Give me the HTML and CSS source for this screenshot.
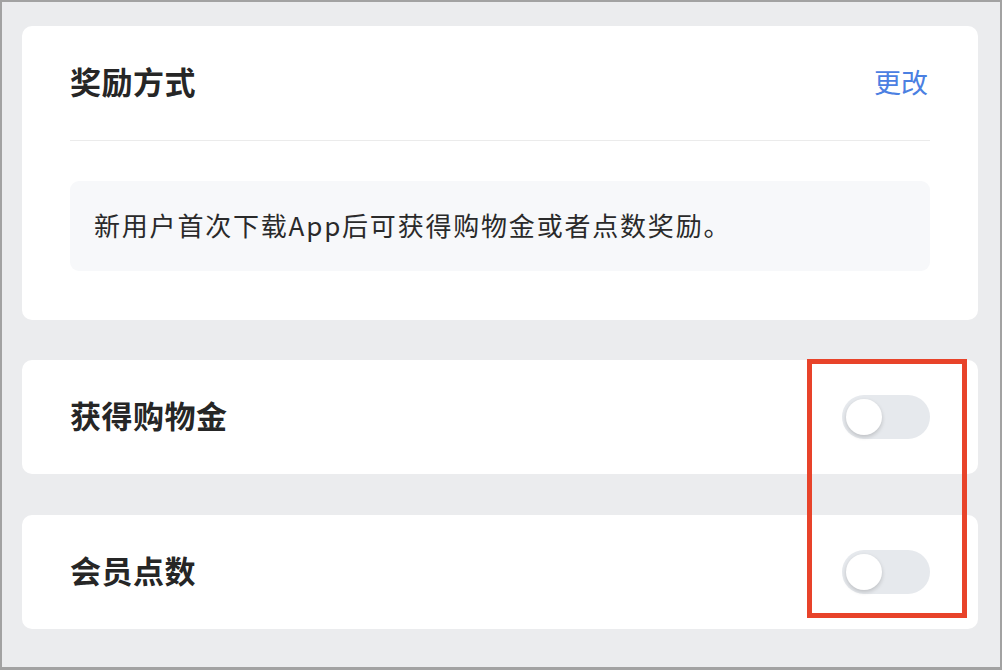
FILE: index.html
```html
<!DOCTYPE html>
<html lang="zh-CN">
<head>
<meta charset="utf-8">
<title>奖励方式</title>
<link rel="stylesheet" href="styles.css">
</head>
<body>
<div class="frame">
  <section class="card card-reward">
    <header class="card-head">
      <h2 class="title">奖励方式</h2>
      <a class="link" href="#">更改</a>
    </header>
    <div class="note">新用户首次下载App后可获得购物金或者点数奖励。</div>
  </section>

  <section class="card row">
    <span class="title">获得购物金</span>
    <span class="switch"><span class="knob"></span></span>
  </section>

  <section class="card row">
    <span class="title">会员点数</span>
    <span class="switch"><span class="knob"></span></span>
  </section>

  <div class="highlight"></div>
</div>
</body>
</html>
```

FILE: styles.css
```css
* { box-sizing: border-box; }

html, body {
  margin: 0;
  padding: 0;
}

body {
  font-family: "Noto Sans CJK SC", "Noto Sans", sans-serif;
  color: #262626;
}

.frame {
  position: relative;
  width: 1002px;
  height: 670px;
  background: #ebecee;
  border: 2px solid #a2a2a2;
  border-bottom-width: 3px;
  padding: 24px 22px 0 20px;
  display: flex;
  flex-direction: column;
  gap: 40px;
}

.card {
  background: #ffffff;
  border-radius: 10px;
  padding: 0 48px;
}

.card-reward {
  height: 294px;
  padding-bottom: 49px;
}

.card-head {
  height: 115px;
  display: flex;
  align-items: center;
  justify-content: space-between;
  border-bottom: 1px solid #ebebeb;
  padding-top: 1px;
}

.title {
  margin: 0 0 6px;
  font-size: 31px;
  font-weight: 700;
  color: #262626;
  letter-spacing: 0.5px;
}

.link {
  margin: 0 2px 4px 0;
  font-size: 27px;
  color: #4b80e2;
  text-decoration: none;
}

.note {
  margin-top: 40px;
  height: 90px;
  background: #f7f8fa;
  border-radius: 9px;
  padding: 0 24px 4px;
  display: flex;
  align-items: center;
  font-size: 26px;
  letter-spacing: 1.8px;
  color: #2a2a2a;
}

.row {
  height: 114px;
  display: flex;
  align-items: center;
  justify-content: space-between;
}

.row + .row {
  margin-top: 1px;
}

.switch {
  width: 88px;
  height: 44px;
  border-radius: 22px;
  background: #e6e9ed;
  display: flex;
  align-items: center;
  padding-left: 4px;
}

.knob {
  width: 36px;
  height: 36px;
  border-radius: 50%;
  background: #ffffff;
  box-shadow: 0 2px 4px rgba(0, 0, 0, 0.18);
}

.highlight {
  position: absolute;
  left: 805px;
  top: 357px;
  width: 160px;
  height: 259px;
  border: 5px solid #e8432a;
}
```
